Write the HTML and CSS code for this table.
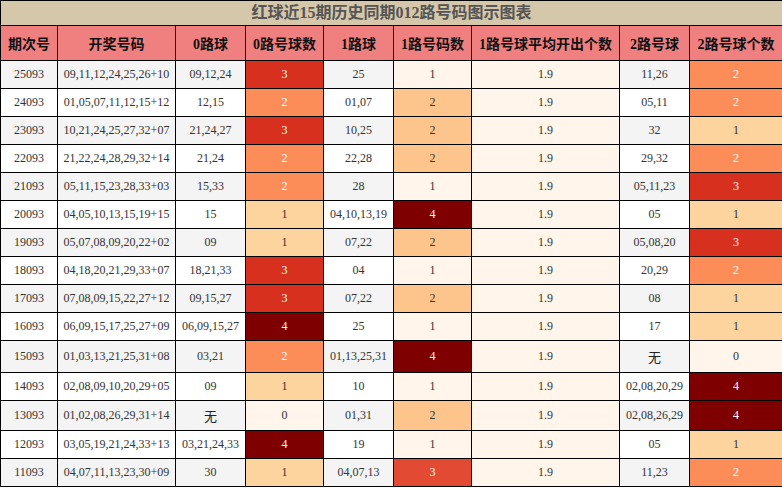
FILE: index.html
```html
<!DOCTYPE html>
<html lang="zh">
<head>
<meta charset="utf-8">
<title>红球近15期历史同期012路号码图示图表</title>
<link rel="stylesheet" href="styles.css">
</head>
<body>
<table class="chart">
  <colgroup>
    <col class="w-issue"><col class="w-draw"><col class="w-n"><col class="w-c"><col class="w-n"><col class="w-c"><col class="w-avg"><col class="w-n"><col class="w-last">
  </colgroup>
  <thead>
    <tr class="title-row"><th colspan="9" class="title">红球近15期历史同期012路号码图示图表</th></tr>
    <tr class="head-row">
      <th>期次号</th><th>开奖号码</th><th>0路球</th><th>0路号球数</th><th>1路球</th><th>1路号码数</th><th>1路号球平均开出个数</th><th>2路号球</th><th>2路号球个数</th>
    </tr>
  </thead>
  <tbody>
    <tr class="odd"><td>25093</td><td>09,11,12,24,25,26+10</td><td>09,12,24</td><td class="q3">3</td><td>25</td><td class="r1">1</td><td class="avg">1.9</td><td>11,26</td><td class="q2">2</td></tr>
    <tr class="even"><td>24093</td><td>01,05,07,11,12,15+12</td><td>12,15</td><td class="q2">2</td><td>01,07</td><td class="r2">2</td><td class="avg">1.9</td><td>05,11</td><td class="q2">2</td></tr>
    <tr class="odd"><td>23093</td><td>10,21,24,25,27,32+07</td><td>21,24,27</td><td class="q3">3</td><td>10,25</td><td class="r2">2</td><td class="avg">1.9</td><td>32</td><td class="q1">1</td></tr>
    <tr class="even"><td>22093</td><td>21,22,24,28,29,32+14</td><td>21,24</td><td class="q2">2</td><td>22,28</td><td class="r2">2</td><td class="avg">1.9</td><td>29,32</td><td class="q2">2</td></tr>
    <tr class="odd"><td>21093</td><td>05,11,15,23,28,33+03</td><td>15,33</td><td class="q2">2</td><td>28</td><td class="r1">1</td><td class="avg">1.9</td><td>05,11,23</td><td class="q3">3</td></tr>
    <tr class="even"><td>20093</td><td>04,05,10,13,15,19+15</td><td>15</td><td class="q1">1</td><td>04,10,13,19</td><td class="r4">4</td><td class="avg">1.9</td><td>05</td><td class="q1">1</td></tr>
    <tr class="odd"><td>19093</td><td>05,07,08,09,20,22+02</td><td>09</td><td class="q1">1</td><td>07,22</td><td class="r2">2</td><td class="avg">1.9</td><td>05,08,20</td><td class="q3">3</td></tr>
    <tr class="even"><td>18093</td><td>04,18,20,21,29,33+07</td><td>18,21,33</td><td class="q3">3</td><td>04</td><td class="r1">1</td><td class="avg">1.9</td><td>20,29</td><td class="q2">2</td></tr>
    <tr class="odd"><td>17093</td><td>07,08,09,15,22,27+12</td><td>09,15,27</td><td class="q3">3</td><td>07,22</td><td class="r2">2</td><td class="avg">1.9</td><td>08</td><td class="q1">1</td></tr>
    <tr class="even"><td>16093</td><td>06,09,15,17,25,27+09</td><td>06,09,15,27</td><td class="q4">4</td><td>25</td><td class="r1">1</td><td class="avg">1.9</td><td>17</td><td class="q1">1</td></tr>
    <tr class="odd taller"><td>15093</td><td>01,03,13,21,25,31+08</td><td>03,21</td><td class="q2">2</td><td>01,13,25,31</td><td class="r4">4</td><td class="avg">1.9</td><td class="none">无</td><td class="q0">0</td></tr>
    <tr class="even"><td>14093</td><td>02,08,09,10,20,29+05</td><td>09</td><td class="q1">1</td><td>10</td><td class="r1">1</td><td class="avg">1.9</td><td>02,08,20,29</td><td class="q4">4</td></tr>
    <tr class="odd tall"><td>13093</td><td>01,02,08,26,29,31+14</td><td class="none">无</td><td class="q0">0</td><td>01,31</td><td class="r2">2</td><td class="avg">1.9</td><td>02,08,26,29</td><td class="q4">4</td></tr>
    <tr class="even"><td>12093</td><td>03,05,19,21,24,33+13</td><td>03,21,24,33</td><td class="q4">4</td><td>19</td><td class="r1">1</td><td class="avg">1.9</td><td>05</td><td class="q1">1</td></tr>
    <tr class="odd"><td>11093</td><td>04,07,11,13,23,30+09</td><td>30</td><td class="q1">1</td><td>04,07,13</td><td class="r3">3</td><td class="avg">1.9</td><td>11,23</td><td class="q2">2</td></tr>
  </tbody>
</table>
</body>
</html>
```

FILE: styles.css
```css
html, body {
  margin: 0;
  padding: 0;
  background: #ffffff;
}

.chart {
  width: 782px;
  table-layout: fixed;
  border-collapse: collapse;
  font-family: "Liberation Serif", "Noto Sans CJK SC", serif;
  font-size: 12px;
  color: #333333;
}

.w-issue { width: 57px; }
.w-draw { width: 118px; }
.w-n { width: 70px; }
.w-c { width: 78px; }
.w-avg { width: 148px; }
.w-last { width: 93px; }

.chart th,
.chart td {
  border: 1px solid #000000;
  text-align: center;
  padding: 0;
  white-space: nowrap;
}

.title {
  height: 24px;
  background: #d5c7a9;
  color: #555555;
  font-size: 16px;
  font-weight: bold;
  line-height: 20px;
}

.head-row th {
  height: 34px;
  background: #f08080;
  color: #111111;
  font-size: 14px;
  font-weight: bold;
}

.chart td {
  height: 27px;
}

.chart .tall td {
  height: 29px;
}

.chart .taller td {
  height: 31px;
}

.chart td.none {
  font-size: 13px;
  color: #222222;
}

.odd td { background: #f4f4f4; }
.even td { background: #ffffff; }

.chart td.avg { background: #fff5eb; }

.chart td.q0 { background: #fff5eb; color: #333333; }
.chart td.q1 { background: #fdd49e; color: #333333; }
.chart td.q2 { background: #fc8d59; color: #ffffff; }
.chart td.q3 { background: #d7301f; color: #ffffff; }
.chart td.q4 { background: #7f0000; color: #ffffff; }

.chart td.r1 { background: #fff5eb; color: #333333; }
.chart td.r2 { background: #fdc48c; color: #333333; }
.chart td.r3 { background: #e34a33; color: #ffffff; }
.chart td.r4 { background: #7f0000; color: #ffffff; }
```
